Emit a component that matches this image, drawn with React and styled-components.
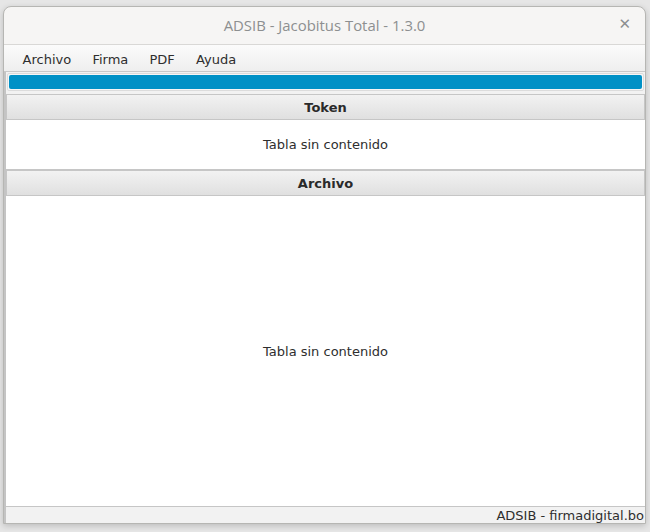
import styled, { createGlobalStyle } from "styled-components";

const Global = createGlobalStyle`
  html, body {
    margin: 0;
    padding: 0;
    background: #e6e6e6;
  }
  body {
    width: 650px;
    height: 532px;
    overflow: hidden;
  }
`

const Desk = styled.div`
  width: 650px;
  height: 532px;
  padding: 6px 4px 8px 3px;
  box-sizing: border-box;
  display: flex;
`
const Window = styled.div`
  flex: 1;
  display: flex;
  flex-direction: column;
  background: #f6f5f4;
  border: 1px solid #b6b6b3;
  border-radius: 8px 8px 0 0;
  box-shadow: 0 2px 6px rgba(0, 0, 0, 0.18);
  overflow: hidden;
`
const TitleBar = styled.div`
  height: 38px;
  padding-bottom: 2px;
  box-sizing: border-box;
  display: flex;
  align-items: center;
  justify-content: center;
  position: relative;
  border-bottom: 1px solid #d9d8d6;
  font-family: "Open Sans", "Noto Sans", sans-serif;
  font-size: 14.9px;
  color: #8d8f90;
`
const CloseButton = styled.span`
  position: absolute;
  right: 14px;
  top: 8px;
  font-size: 15px;
  color: #8d8f90;
  font-family: "DejaVu Sans", sans-serif;
`
const MenuBar = styled.div`
  height: 27px;
  display: flex;
  align-items: center;
  padding-left: 8px;
  padding-top: 2px;
  box-sizing: border-box;
  background: linear-gradient(#fbfbfb, #eeeeee);
  border-bottom: 1px solid #c9c9c9;
`
const MenuItem = styled.span`
  font-family: "DejaVu Sans", sans-serif;
  font-size: 13px;
  color: #2e2e2e;
  padding: 0 10.6px;
`
const Content = styled.div`
  flex: 1;
  display: flex;
  flex-direction: column;
  border-left: 2px solid #c4c4c4;
  background: #f2f2f2;
`
const ProgressTrack = styled.div`
  margin: 1px 1px 3px 1px;
  height: 14px;
  border: 1px solid #dcdcdc;
  border-radius: 2px;
  background: #f6f6f6;
  padding: 1px;
`
const ProgressFill = styled.div`
  height: 100%;
  border-radius: 2px;
  background: #0091c6;
`
const Header = styled.div`
  height: 24px;
  display: flex;
  align-items: center;
  justify-content: center;
  background: linear-gradient(#f2f2f2, #e0e0e0);
  border: 1px solid #c6c6c6;
  font-family: "DejaVu Sans", sans-serif;
  font-weight: bold;
  font-size: 13px;
  color: #2a2a2a;
`
const Table = styled.div`
  height: ${(p) => (p.$grow ? "auto" : "49px")};
  flex: ${(p) => (p.$grow ? 1 : "none")};
  display: flex;
  align-items: center;
  justify-content: center;
  background: #ffffff;
  font-family: "DejaVu Sans", sans-serif;
  font-size: 13px;
  color: #2e2e2e;
  border-bottom: 1px solid #c6c6c6;
`
const StatusBar = styled.div`
  height: 16px;
  display: flex;
  align-items: center;
  justify-content: flex-end;
  padding-right: 1px;
  background: #f2f2f2;
  font-family: "DejaVu Sans", sans-serif;
  font-size: 13px;
  color: #2e2e2e;
`

export default function App() {
  const menus = ["Archivo", "Firma", "PDF", "Ayuda"];
  return (
    <>
      <Global />
      <Desk>
        <Window>
          <TitleBar>
            ADSIB - Jacobitus Total - 1.3.0
            <CloseButton>✕</CloseButton>
          </TitleBar>
          <MenuBar>
            {menus.map((m) => (
              <MenuItem key={m}>{m}</MenuItem>
            ))}
          </MenuBar>
          <Content>
            <ProgressTrack>
              <ProgressFill />
            </ProgressTrack>
            <Header>Token</Header>
            <Table>Tabla sin contenido</Table>
            <Header>Archivo</Header>
            <Table $grow>Tabla sin contenido</Table>
            <StatusBar>ADSIB - firmadigital.bo</StatusBar>
          </Content>
        </Window>
      </Desk>
    </>
  )
}
